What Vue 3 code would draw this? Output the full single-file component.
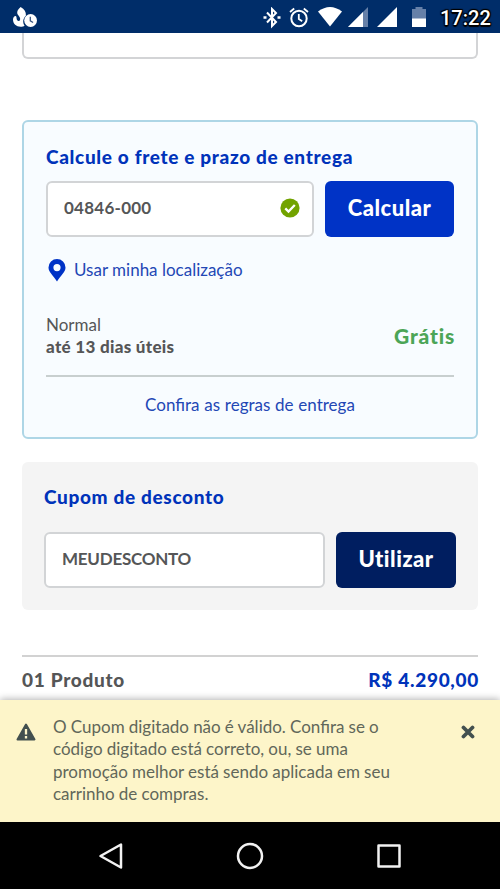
<script setup>
const message = [
  'O Cupom digitado não é válido. Confira se o',
  'código digitado está correto, ou, se uma',
  'promoção melhor está sendo aplicada em seu',
  'carrinho de compras.',
]
</script>

<template>
  <div class="screen">
    <header class="status">
      <svg class="app-icon" viewBox="0 0 26 22" width="26" height="22">
        <path d="M7.600 0C5 2.200 3.800 4.500 4.300 6.400c.4 1.300 1.600 2.400 2.400 3.800.8 1.500.6 3.400-.7 3.700-1.300.2-2.300-.8-2.400-2.500C3.500 10.200 3.400 9 2.600 9 1.200 9 0 10.600 0 12.600 0 17 3.300 19.800 7.600 19.800c1.700 0 3-.4 4-1.100-2.200-3-1.700-7.500 1.300-9.900C13.200 5 11.500 2 7.600 0z" fill="#fff" />
        <circle cx="17.600" cy="13.500" r="6.400" fill="#fff" />
        <path d="M17.300 9.800v4l2.800 1.700" fill="none" stroke="#385481" stroke-width="1.300" />
      </svg>
      <div class="indicators">
        <svg viewBox="0 0 18 22" width="18" height="22" fill="none" stroke="#fff" stroke-width="2">
          <path d="M4 5.500l9 9.500-4 4V2l4 4-9 9.500" />
          <path d="M0.500 10.500h3M14.500 10.500h3" stroke-width="2.600" />
        </svg>
        <svg viewBox="0 0 20 22" width="20" height="22" fill="none" stroke="#fff" stroke-width="2">
          <circle cx="10" cy="11.500" r="7.700" />
          <path d="M1 5l4.200-3.500M19 5l-4.200-3.500M9.800 7v5l3.400 2.300" stroke-width="1.800" />
        </svg>
        <svg class="wifi" viewBox="0 0 25 22" width="24" height="22" preserveAspectRatio="none">
          <path d="M0 4.500Q12.500-4.500 25 4.500L12.500 19.500z" fill="#fff" />
        </svg>
        <svg viewBox="0 0 20 22" width="20" height="22">
          <path d="M20 0v20H0z" fill="#6680a8" />
          <path d="M15 5v15H0z" fill="#fff" />
        </svg>
        <svg viewBox="0 0 20 22" width="20" height="22">
          <path d="M20 0v20H0z" fill="#fff" />
        </svg>
        <svg class="battery" viewBox="0 0 14 22" width="14" height="22">
          <path d="M0 2h3.500V0h7v2H14v18H0z" fill="#6680a8" />
          <path d="M0 11.500h14V20H0z" fill="#fff" />
        </svg>
      </div>
      <span class="clock">17:22</span>
    </header>

    <main class="page">
      <div class="previous"></div>

      <section class="shipping">
        <h2 class="title">Calcule o frete e prazo de entrega</h2>
        <div class="row">
          <div class="field">
            <span class="zip">04846-000</span>
            <svg viewBox="0 0 20 20" width="20" height="20">
              <circle cx="10" cy="10" r="9.600" fill="#72a300" />
              <path d="M5.300 10.400l3.200 3.200 6.300-6.600" fill="none" stroke="#fff" stroke-width="2.300" />
            </svg>
          </div>
          <button class="calc">Calcular</button>
        </div>
        <a class="locate">
          <svg viewBox="0 0 18 23" width="18" height="23">
            <path fill-rule="evenodd" d="M9 0a8.500 8.500 0 0 0-8.500 8.500C.5 13 5 16 9 22.500 13 16 17.500 13 17.500 8.500A8.500 8.500 0 0 0 9 0zm0 5a3.600 3.600 0 1 1 0 7.200A3.600 3.600 0 0 1 9 5z" fill="#0033c6" />
          </svg>
          <span>Usar minha localização</span>
        </a>
        <div class="option">
          <div>
            <div>Normal</div>
            <div class="eta">até 13 dias úteis</div>
          </div>
          <strong class="free">Grátis</strong>
        </div>
        <a class="rules">Confira as regras de entrega</a>
      </section>

      <section class="coupon">
        <h2 class="title">Cupom de desconto</h2>
        <div class="row">
          <div class="field"><span class="code">MEUDESCONTO</span></div>
          <button class="use">Utilizar</button>
        </div>
      </section>

      <div class="summary">
        <span>01 Produto</span>
        <span class="total">R$ 4.290,00</span>
      </div>
    </main>

    <aside class="alert">
      <svg class="warn" viewBox="0 0 20 18" width="20" height="18">
        <path d="M10 1.500L18.500 16.500H1.500z" fill="#43504f" stroke="#43504f" stroke-width="2" stroke-linejoin="round" />
        <path d="M10 6v5.500M10 13v2.500" stroke="#fdf5c9" stroke-width="2.300" />
      </svg>
      <p class="message">
        <span v-for="line in message" :key="line">{{ line }}</span>
      </p>
      <svg class="close" viewBox="0 0 14 14" width="14" height="14">
        <path d="M2.500 2.500l9 9M11.500 2.500l-9 9" stroke="#43504f" stroke-width="3.800" stroke-linecap="round" />
      </svg>
    </aside>

    <nav class="nav">
      <svg viewBox="0 0 28 28" width="28" height="28"><path d="M24 2.500v23L3.500 14z" /></svg>
      <svg viewBox="0 0 28 28" width="28" height="28"><circle cx="14" cy="14" r="12" /></svg>
      <svg viewBox="0 0 28 28" width="28" height="28"><path d="M3.500 3.500h21v21h-21z" /></svg>
    </nav>
  </div>
</template>

<style>
body { background: #fff; }
</style>

<style scoped>
* { box-sizing: border-box; }
.screen { width: 500px; height: 889px; overflow: hidden; display: flex; flex-direction: column; background: #fff; color: #555657; font: 17px/22px Lato, "Open Sans", sans-serif; }
svg { display: block; flex: none; }
.status { flex: none; height: 33px; background: #002d69; display: flex; align-items: flex-start; padding: 7px 11px 0 13px; }
.app-icon { margin-right: auto; }
.indicators { display: flex; gap: 9px; }
.indicators svg:nth-child(2) { margin-left: -1px; }
.wifi { margin-right: -3px; }
.battery { margin-left: 6px; }
.clock { width: 49px; margin-left: 14px; font: 500 20px/22px Roboto, sans-serif; color: #fff; text-shadow: -1px -1px 1px #000, 1px -1px 1px #000, -1px 1px 1px #000, 1px 1px 1px #000, 0 2px 1px #000; }
.page { flex: none; height: 667px; padding: 0 22px; }
.previous { height: 26px; border: 2px solid #d3d4d6; border-top: 0; border-radius: 0 0 6px 6px; }
.shipping { margin-top: 61px; height: 319px; border: 2px solid #aed6e6; border-radius: 6px; background: #f8fcff; padding: 23px 22px 0; }
.title { margin: 0; color: #0033ba; font-size: 19px; line-height: 24px; font-weight: 900; letter-spacing: .66px; white-space: nowrap; }
.row { display: flex; gap: 11px; }
.field { flex: 1; height: 56px; border: 2px solid #d2d4d6; border-radius: 6px; background: #fff; display: flex; justify-content: space-between; align-items: center; padding: 0 12px 2px 16px; font-weight: 700; }
.zip { letter-spacing: .25px; }
.code { letter-spacing: -.25px; }
button { border: 0; border-radius: 6px; color: #fff; height: 56px; padding: 0 0 3px; font: 900 22px/26px Lato, "Open Sans", sans-serif; letter-spacing: .5px; }
.shipping .row { margin-top: 12px; }
.calc { width: 129px; background: #0033c6; }
.use { width: 120px; background: #001e60; }
.locate { display: flex; gap: 8px; align-items: center; margin: 21px 0 0 2px; height: 24px; color: #2347b5; }
.option { margin-top: 32px; height: 63px; border-bottom: 2px solid #c8cfcf; display: flex; justify-content: space-between; }
.eta { font-weight: 900; letter-spacing: .3px; }
.free { margin: 9px -1px 0 0; font-size: 21px; line-height: 26px; font-weight: 900; letter-spacing: .8px; color: #4ca557; }
.rules { display: block; margin-top: 17px; text-align: center; color: #2347b5; word-spacing: .4px; }
.coupon { margin-top: 23px; height: 148px; border-radius: 6px; background: #f4f4f4; padding: 23px 22px 0; }
.coupon .row { margin-top: 23px; }
.summary { margin-top: 45px; border-top: 2px solid #d2d2d2; padding-top: 10px; display: flex; justify-content: space-between; font-size: 19px; line-height: 26px; font-weight: 900; letter-spacing: .7px; }
.total { color: #0033ba; margin-right: -1px; }
.alert { position: relative; flex: none; height: 122px; background: #fdf5c9; box-shadow: 0 -1px 7px rgba(0, 0, 0, .3); display: flex; align-items: flex-start; padding: 17px 25px 0 16px; color: #61675a; }
.warn { margin-top: 6px; }
.message { margin: -1px auto 0 17px; display: flex; flex-direction: column; line-height: 22.300px; white-space: nowrap; align-items: flex-start; word-spacing: -.2px; }
.close { margin-top: 8px; }
.nav { position: relative; flex: none; height: 67px; background: #000; display: flex; justify-content: space-between; padding: 20px 97px; }
.nav svg { fill: none; stroke: #f2f2f2; stroke-width: 2.500; stroke-linejoin: round; }
</style>
